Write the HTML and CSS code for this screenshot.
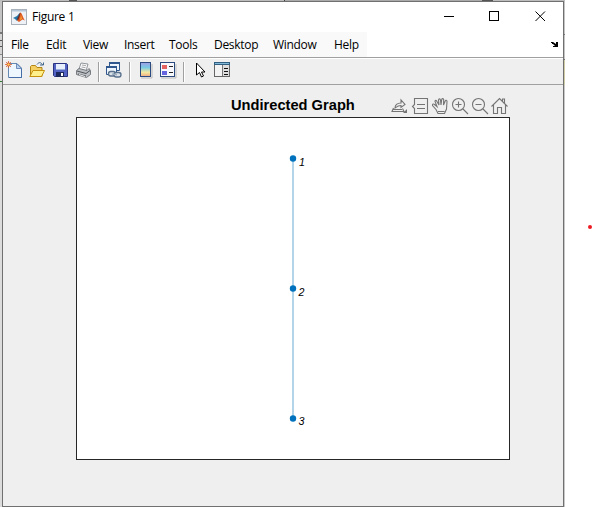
FILE: index.html
```html
<!DOCTYPE html>
<html lang="en">
<head>
<meta charset="utf-8">
<title>Figure 1</title>
<link rel="stylesheet" href="styles.css">
</head>
<body>
<div class="desktop">
<main class="window">
  <header class="titlebar">
    <svg class="app-icon" width="16" height="16" viewBox="0 0 16 16">
      <rect x=".5" y=".5" width="15" height="15" fill="#eef1f5" stroke="#a9b1bb"/>
      <path d="M1 1h14v1.5H1z" fill="#b4c6da"/>
      <path d="M2 9l4-2 3-3.5L8 10l-2 2-2-2z" fill="#2776a8"/>
      <path d="M6 11.5C8 10 8 4 9.5 3.5 11 4 12 9 14 11.500L11.500 10.500 8 13z" fill="#df5b22"/>
      <path d="M9.500 3.500C8.800 6 8.500 9.500 7 11l-1-1C7.500 8 8 5 9.500 3.500z" fill="#72251b"/>
      <path d="M10 6l1 4-2 1z" fill="#f7a334"/>
    </svg>
    <h1 class="caption">Figure 1</h1>
    <svg class="controls" width="98" height="12" viewBox="0 0 98 12" fill="none" stroke="#000">
      <path d="M0 5.500h10"/>
      <rect x="45.500" y=".5" width="9" height="9"/>
      <path d="M91.500 .5l9.500 9.500M101 .5L91.500 10"/>
    </svg>
  </header>
  <nav class="menubar">
    <div class="menus">
      <span class="menu file">File</span><span class="menu edit">Edit</span><span class="menu view">View</span><span class="menu insert">Insert</span><span class="menu tools">Tools</span><span class="menu desk">Desktop</span><span class="menu win">Window</span><span class="menu help">Help</span>
    </div>
    <svg class="dock" width="8" height="6" viewBox="0 0 8 6"><path d="M0 1V0h2l3 2V0h2v5H2V4h2L2 2H1V1z"/></svg>
  </nav>
  <div class="toolbar">
    <svg class="tool new" viewBox="0 0 18 18">
      <path d="M4 2.500h8l4.500 4.500v9.500H3.500V3" fill="#eef6ff" stroke="#6689b4"/>
      <path d="M11.500 2.500v5h5z" fill="#b8d0ed" stroke="#5678ac" stroke-width=".8"/>
      <path d="M4 16.500h12.500V8" fill="none" stroke="#456da7"/>
      <path d="M1 1l5 5M6 1L1 6M3.500 0v7M0 3.500h7" stroke="#db6538" stroke-width=".8"/>
      <circle cx="3.500" cy="3.500" r="1.600" fill="#ffd65d" stroke="#d8592e"/>
    </svg>
    <svg class="tool open" viewBox="0 0 18 18">
      <path d="M2.500 15.500V5.500l1-1h4l1.500 2h5v9z" fill="#f5ce61" stroke="#b18616"/>
      <path d="M5 9.500h11.500l-3 6H1.800z" fill="#fff08c" stroke="#c6920c"/>
      <path d="M9 3.500c2-3 4.500-2 5.500.5M12 4h3.500V1.500" fill="none" stroke="#42678b"/>
    </svg>
    <svg class="tool save" viewBox="0 0 18 18">
      <path d="M1.500 2.500h13l1 1v12h-13l-1-1z" fill="#5263c3" stroke="#29337f"/>
      <path d="M4 3h9v6H4z" fill="#e6effb"/><path d="M4 8h9v1H4z" fill="#9aafda"/>
      <path d="M4 11h8v5H4z" fill="#1c275b"/><path d="M9 12h2v3H9z" fill="#fff"/>
    </svg>
    <svg class="tool print" viewBox="0 0 18 18">
      <path d="M4 8l2-6 7 1-2 7z" fill="#f8f9fa" stroke="#878b90" stroke-width=".9"/>
      <path d="M7 4l4 .7M6.500 6l4 .7" stroke="#aaa"/>
      <path d="M1.500 9.500L4 7.500l8 2 2-2 1.500 2v4l-4 3-10-3z" fill="#bcbfc3" stroke="#777c82"/>
      <path d="M2 10l9 2.500 4-3M3 13l8 2" fill="none" stroke="#50555b"/>
      <path d="M4 13.500l6 2" stroke="#eee"/>
    </svg>
    <i class="sep"></i>
    <svg class="tool link" viewBox="0 0 18 18">
      <path d="M4.500 1.500h10v8h-10z" fill="#edf4fb" stroke="#31588c"/><path d="M4 1h11v2H4z" fill="#2f578e"/>
      <path d="M1.500 5.500h10v8h-10z" fill="#edf4fb" stroke="#31588c"/><path d="M1 5h11v2H1z" fill="#2f578e"/>
      <rect x="3.500" y="10.500" width="7" height="4.500" rx="2.200" fill="#dce3ea" stroke="#566f8b" stroke-width="1.300"/>
      <rect x="9" y="11.500" width="7" height="4.500" rx="2.200" fill="#dce3ea" stroke="#566f8b" stroke-width="1.300"/>
      <path d="M7 13l5 .8" stroke="#9badbf" stroke-width="1.500"/>
    </svg>
    <i class="sep"></i>
    <svg class="tool colorbar" viewBox="0 0 18 18">
      <defs><linearGradient id="cb" x2="0" y2="1"><stop stop-color="#a39ee4"/><stop offset=".35" stop-color="#77c9e5"/><stop offset=".7" stop-color="#f3e9a0"/><stop offset="1" stop-color="#efaa82"/></linearGradient></defs>
      <path d="M2 17h11V3" fill="none" stroke="#bbb"/>
      <rect x="1.500" y="1.500" width="10" height="14" fill="url(#cb)" stroke="#2b4b80"/>
    </svg>
    <svg class="tool legend" viewBox="0 0 18 18">
      <path d="M2 17h15V3" fill="none" stroke="#bbb"/>
      <rect x="1.500" y="1.500" width="14" height="14" fill="#f7f9ff" stroke="#2b4b80"/>
      <path d="M3 4h5v4H3z" fill="#e46464"/><path d="M3 10h5v4H3z" fill="#6565df"/>
      <path d="M10 5.500h4M10 11.500h4" stroke="#222"/>
    </svg>
    <i class="sep"></i>
    <svg class="tool pointer" viewBox="0 0 18 18"><path d="M1.500 2v12l3-2.500 2 4.500 2-1-2-4h3.500z" fill="#fff" stroke="#000"/></svg>
    <svg class="tool inspector" viewBox="0 0 18 18">
      <rect x="1.500" y="1.500" width="15" height="14" fill="#f3f3f3" stroke="#666"/>
      <path d="M1 1h16v3H1z" fill="#315f80"/><path d="M2 2h14v1H2z" fill="#83b9d8"/>
      <path d="M9.500 4v11" stroke="#777"/><path d="M10 4h6v11h-6z" fill="#dedede"/>
      <path d="M11 7.500h4M11 10.500h4M11 13.500h4" stroke="#111"/>
    </svg>
  </div>
  <section class="figure">
    <div class="plot-head">
      <h2 class="plot-title">Undirected Graph</h2>
      <div class="axes-tools">
        <svg viewBox="0 0 20 18"><path d="M3.500 11L2 14.500h12l-1.500-3M5 11c0-3 2-5 6-5V3l4 4.500-4 3v-2c-3 0-4 1-6 2.500zM3 12.500h9"/><path class="solid" d="M17 12v4h-4z"/></svg>
        <svg viewBox="0 0 20 18"><path d="M4.500 1.500h13v15h-13v-5l-2-2 2-2zM7 7.500h8M7 11.500h8"/></svg>
        <svg viewBox="0 0 20 18"><path d="M8 16.500l-2-4-3.500-4c-.3-1.500 1.200-2 2-1l2.500 2L5 4.500c0-1.500 1.500-1.500 2 0L9 8 8.500 3c.2-1.500 1.700-1.500 2 0L11 8l.7-5.500c.3-1.300 1.800-1.200 2 .2L13.500 8l1.700-4c.5-1.300 1.900-.8 1.800.5L16.500 12l-2 4.500zM8 14.500h6.500"/></svg>
        <svg viewBox="0 0 20 18"><circle cx="8.500" cy="7.500" r="6"/><path d="M13 12l5 5M5.500 7.500h6M8.500 4.500v6"/></svg>
        <svg viewBox="0 0 20 18"><circle cx="8.500" cy="7.500" r="6"/><path d="M13 12l5 5M5.500 7.500h6"/></svg>
        <svg viewBox="0 0 20 18"><path d="M1.500 9.500l8-8 8 8M3.500 8v8.500h4v-6h4v6h4V8M14.500 6V2h-2v2.500"/></svg>
      </div>
    </div>
    <svg class="axes" viewBox="0 0 434 343">
      <rect x=".5" y=".5" width="433" height="342" fill="#fff" stroke="#262626"/>
      <path d="M217 41.500v260" stroke="#b3d5ea" stroke-width="2"/>
      <g fill="#0072bd"><circle cx="217" cy="41.500" r="3.200"/><circle cx="217" cy="171.500" r="3.200"/><circle cx="217" cy="301.500" r="3.200"/></g>
      <g class="node-labels"><text x="223" y="49">1</text><text x="222.500" y="179">2</text><text x="222.500" y="308">3</text></g>
    </svg>
  </section>
</main>
<aside class="canvas"><i class="red-dot"></i></aside>
</div>
</body>
</html>
```
FILE: styles.css
```css
* { box-sizing: border-box; }
body { margin: 0; background: #fff; overflow: hidden; }
/* Slivers of the windows behind the figure: top edge, left edge, right edge */
.desktop {
  display: grid;
  grid-template-columns: 565px 28px;
  height: 507px;
  background:
    linear-gradient(90deg, #bdbdbd 69px, #555 69px 77px, #bdbdbd 77px 284px, #444 284px 285px, #aaa 285px 482px, #555 482px 493px, #bdbdbd 493px) 0 0 / 565px 1px no-repeat,
    linear-gradient(#c4c4c4 32px, #777 32px 34px, #d4d4d4 34px 40px, #555 40px 41px, #d4d4d4 41px 46px, #555 46px 47px, #d4d4d4 47px 54px, #888 54px 55px, #dedede 55px 81px, #2e7d32 81px 82px, #dcdcdc 82px) 0 0 / 2px 507px no-repeat,
    linear-gradient(#c4c4c4 34px, #777 34px 35px, #c4c4c4 35px 59px, #777 59px 60px, #cfcba4 60px 85px, #c8c8c8 85px) 564px 0 / 1px 507px no-repeat;
}
.window {
  margin: 1px 1px 0 2px;
  border: 1px solid #707070;
  background: #efefef;
  display: flex;
  flex-direction: column;
}
.titlebar { height: 30px; background: #fff; display: flex; align-items: flex-start; padding: 6px 0 0 8px; }
.app-icon { margin-top: 1px; }
.caption { margin: 1px 0 0 5px; font: 400 12px/16px "Open Sans", sans-serif; letter-spacing: -.28px; }
.controls { margin: 3px 21px 0 auto; overflow: visible; }
.menubar { height: 25px; background: #fff; display: flex; justify-content: space-between; }
.menus { width: 364px; background: #f9f9f9; display: flex; padding-left: 8px; font: 12px/25px "Open Sans", sans-serif; letter-spacing: -.3px; }
.menu { white-space: nowrap; }
.file { width: 35px; }
.edit { width: 37px; }
.view { width: 41px; }
.insert { width: 45px; }
.tools { width: 45px; }
.desk { width: 59px; }
.win { width: 61px; }
.dock { margin: 10px 4px 0 0; }
.toolbar { height: 28px; border-top: 1px solid #a0a0a0; border-bottom: 1px solid #a0a0a0; box-shadow: inset 0 1px #fff; display: flex; padding: 3px 0 0 2px; }
.tool { width: 18px; height: 18px; flex: none; }
.open { margin-left: 5px; }
.save { margin-left: 6px; }
.print { margin-left: 5px; }
.sep { width: 1px; height: 20px; background: #a0a0a0; margin: 1px 6px 0 5px; box-shadow: 1px 0 #fff; }
.link { margin-right: 1px; }
.colorbar { margin-left: 3px; }
.legend { margin-left: 2px; margin-right: 1px; }
.pointer { margin-left: 5px; }
.figure { flex: 1; padding: 11px 0 0 73px; }
.plot-head { display: flex; height: 21px; width: 434px; justify-content: space-between; padding-left: 155px; }
.plot-title { margin: 0; font: 700 14.67px/18px "Liberation Sans", Arial, sans-serif; white-space: nowrap; }
.axes-tools { display: flex; padding-top: 1px; }
.axes-tools svg { width: 20px; height: 18px; fill: none; stroke: #747474; stroke-width: 1.1; }
.axes-tools .solid { fill: #747474; stroke: none; }
.axes { display: block; width: 434px; height: 343px; }
.node-labels { font: italic 10.7px "Liberation Sans", Arial, sans-serif; }
.canvas { display: flex; justify-content: flex-end; padding: 225px 1px 0 0; }
.red-dot { width: 4px; height: 4px; border-radius: 50%; background: #ed1c24; }
```
